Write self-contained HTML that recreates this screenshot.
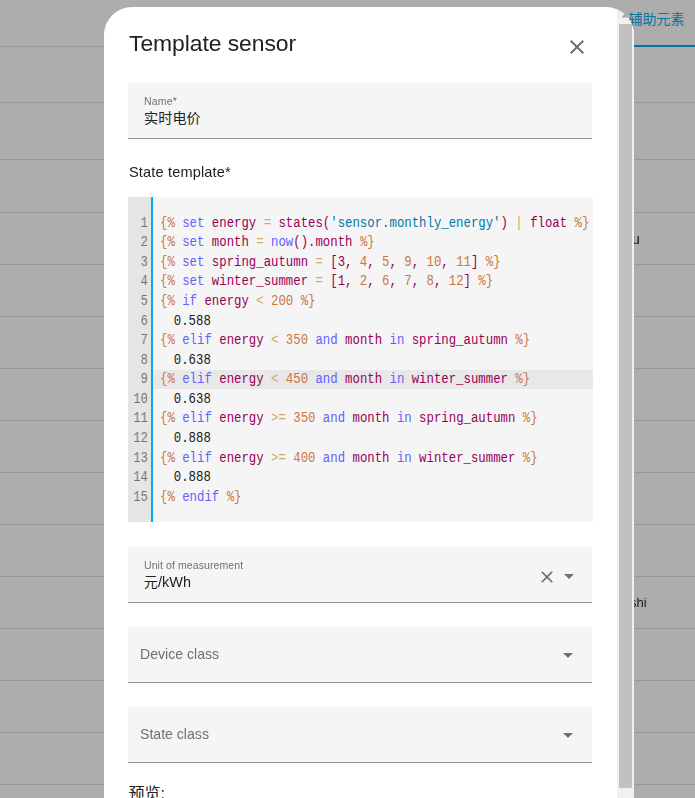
<!DOCTYPE html>
<html><head><meta charset="utf-8"><title>Template sensor</title>
<style>
html,body{margin:0;padding:0}
body{width:695px;height:798px;overflow:hidden;position:relative;background:#adadad;font-family:"Liberation Sans",sans-serif;color:#212121}
.abs{position:absolute}
.bl{position:absolute;left:0;width:695px;height:1px;background:#989898}
.tab{position:absolute;left:634px;top:45px;width:61px;height:2px;background:#0273a6}
.bgt{position:absolute;color:#171717;white-space:nowrap}
.dlg{position:absolute;left:104px;top:7px;width:530px;height:900px;background:#fff;border-radius:28px;overflow:hidden}
/* everything inside dlg positioned relative to page via offset wrapper */
.in{position:absolute;left:-104px;top:-7px;width:695px;height:900px}
.title{position:absolute;left:129px;top:28.5px;font-size:22.9px;letter-spacing:-0.06px;line-height:28px;color:#212121;white-space:nowrap}
.fld{position:absolute;left:128px;width:464px;height:56px;background:#f5f5f5;border-radius:4px 4px 0 0;box-sizing:border-box;border-bottom:1px solid #8e8e8e}
.title,.lbl,.txt,.bgt{will-change:transform}
.lbl{position:absolute;white-space:nowrap;color:#707070}
.txt{position:absolute;white-space:nowrap;color:#212121}
.cjk{position:absolute;white-space:nowrap;font-family:"Liberation Sans","Noto Sans CJK SC",sans-serif}
.ed{position:absolute;left:128px;top:197px;width:465px;height:325.3px;background:#f5f5f5}
.gut{position:absolute;left:128px;top:197px;width:23px;height:325.3px;background:#e5e5e5;border-right:2px solid #03a9f4}
.cl,.gn{position:absolute;font-family:"Liberation Mono",monospace;font-size:14px;line-height:19.57px;height:19.57px;white-space:pre}
.cl{left:159.7px;transform-origin:0 0;transform:scaleX(.881);color:#212121}
.gn{left:128px;width:20px;text-align:right;color:#727272;transform-origin:100% 0;}
.gn{transform:scaleX(.881);will-change:transform}
.actbg{position:absolute;left:153px;width:440px;height:19.57px;background:#e8e8e8}
.k{color:#6262ff}.v{color:#990055}.t{color:#ca7841}.o{color:#cda869}.n{color:#ca7841}.s{color:#0077aa}.p{color:#212121}
.sbt{position:absolute;left:617px;top:7px;width:17px;height:900px;background:#f1f1f1}
.sbth{position:absolute;left:619px;top:24px;width:13px;height:763.6px;background:#c1c1c1}
svg.ic{position:absolute;width:24px;height:24px}
</style></head><body>
<div class="bl" style="top:46px"></div><div class="bl" style="top:102px"></div><div class="bl" style="top:159px"></div><div class="bl" style="top:212px"></div><div class="bl" style="top:264px"></div><div class="bl" style="top:316px"></div><div class="bl" style="top:368px"></div><div class="bl" style="top:420px"></div><div class="bl" style="top:472px"></div><div class="bl" style="top:524px"></div><div class="bl" style="top:576px"></div><div class="bl" style="top:628px"></div><div class="bl" style="top:680px"></div><div class="bl" style="top:732px"></div><div class="bl" style="top:784px"></div>
<div class="tab"></div>
<div class="cjk" style="left:628.4px;top:9.7px;font-size:14px;line-height:18.2px;height:18.2px;color:#0a73a4">辅助元素</div>
<div class="bgt" style="left:631.6px;top:231px;font-size:14px;line-height:16px">u</div>
<div class="bgt" style="left:629.6px;top:595px;font-size:13px;line-height:16px">shi</div>
<div class="dlg"><div class="in">
  <div class="title">Template sensor</div>
  <svg class="ic" style="left:565px;top:35px" viewBox="0 0 24 24"><path fill="#6f6f6f" d="M19,6.41L17.59,5L12,10.59L6.41,5L5,6.41L10.59,12L5,17.59L6.41,19L12,13.41L17.59,19L19,17.59L13.41,12L19,6.41Z"/></svg>

  <div class="fld" style="top:83px"></div>
  <div class="lbl" style="left:144px;top:94px;font-size:10.5px;letter-spacing:.2px;line-height:14px">Name*</div>
  <div class="cjk" style="left:144px;top:108.9px;font-size:14.2px;line-height:18.46px;height:18.46px;color:#212121">实时电价</div>

  <div class="txt" style="left:128.5px;top:163px;font-size:14.6px;letter-spacing:.14px;line-height:18px">State template*</div>

  <div class="ed"></div>
  <div class="cl" style="top:213.70px"><span class="t">{%</span><span class="k"> set</span><span class="v"> energy </span><span class="o">=</span><span class="v"> states(</span><span class="s">'sensor.monthly_energy'</span><span class="v">) </span><span class="o">|</span><span class="v"> float </span><span class="t">%}</span></div><div class="cl" style="top:233.27px"><span class="t">{%</span><span class="k"> set</span><span class="v"> month </span><span class="o">=</span><span class="k"> now</span><span class="v">().month </span><span class="t">%}</span></div><div class="cl" style="top:252.84px"><span class="t">{%</span><span class="k"> set</span><span class="v"> spring_autumn </span><span class="o">=</span><span class="v"> [3,</span><span class="n"> 4</span><span class="v">,</span><span class="n"> 5</span><span class="v">,</span><span class="n"> 9</span><span class="v">,</span><span class="n"> 10</span><span class="v">,</span><span class="n"> 11</span><span class="v">] </span><span class="t">%}</span></div><div class="cl" style="top:272.41px"><span class="t">{%</span><span class="k"> set</span><span class="v"> winter_summer </span><span class="o">=</span><span class="v"> [1,</span><span class="n"> 2</span><span class="v">,</span><span class="n"> 6</span><span class="v">,</span><span class="n"> 7</span><span class="v">,</span><span class="n"> 8</span><span class="v">,</span><span class="n"> 12</span><span class="v">] </span><span class="t">%}</span></div><div class="cl" style="top:291.98px"><span class="t">{%</span><span class="k"> if</span><span class="v"> energy </span><span class="o">&lt;</span><span class="n"> 200</span><span class="v"> </span><span class="t">%}</span></div><div class="cl" style="left:158.5px;top:311.55px"><span class="p">  0.588</span></div><div class="cl" style="top:331.12px"><span class="t">{%</span><span class="k"> elif</span><span class="v"> energy </span><span class="o">&lt;</span><span class="n"> 350</span><span class="k"> and</span><span class="v"> month</span><span class="k"> in</span><span class="v"> spring_autumn </span><span class="t">%}</span></div><div class="cl" style="left:158.5px;top:350.69px"><span class="p">  0.638</span></div><div class="actbg" style="top:369.56px"></div><div class="cl" style="top:370.26px"><span class="t">{%</span><span class="k"> elif</span><span class="v"> energy </span><span class="o">&lt;</span><span class="n"> 450</span><span class="k"> and</span><span class="v"> month</span><span class="k"> in</span><span class="v"> winter_summer </span><span class="t">%}</span></div><div class="cl" style="left:158.5px;top:389.83px"><span class="p">  0.638</span></div><div class="cl" style="top:409.40px"><span class="t">{%</span><span class="k"> elif</span><span class="v"> energy </span><span class="o">&gt;=</span><span class="n"> 350</span><span class="k"> and</span><span class="v"> month</span><span class="k"> in</span><span class="v"> spring_autumn </span><span class="t">%}</span></div><div class="cl" style="left:158.5px;top:428.97px"><span class="p">  0.888</span></div><div class="cl" style="top:448.54px"><span class="t">{%</span><span class="k"> elif</span><span class="v"> energy </span><span class="o">&gt;=</span><span class="n"> 400</span><span class="k"> and</span><span class="v"> month</span><span class="k"> in</span><span class="v"> winter_summer </span><span class="t">%}</span></div><div class="cl" style="left:158.5px;top:468.11px"><span class="p">  0.888</span></div><div class="cl" style="top:487.68px"><span class="t">{%</span><span class="k"> endif</span><span class="v"> </span><span class="t">%}</span></div>
  <div class="gut"></div>
  <div class="gn" style="top:213.70px">1</div><div class="gn" style="top:233.27px">2</div><div class="gn" style="top:252.84px">3</div><div class="gn" style="top:272.41px">4</div><div class="gn" style="top:291.98px">5</div><div class="gn" style="top:311.55px">6</div><div class="gn" style="top:331.12px">7</div><div class="gn" style="top:350.69px">8</div><div class="gn" style="top:370.26px">9</div><div class="gn" style="top:389.83px">10</div><div class="gn" style="top:409.40px">11</div><div class="gn" style="top:428.97px">12</div><div class="gn" style="top:448.54px">13</div><div class="gn" style="top:468.11px">14</div><div class="gn" style="top:487.68px">15</div>

  <div class="fld" style="top:547px"></div>
  <div class="lbl" style="left:144px;top:558px;font-size:10.5px;letter-spacing:.09px;line-height:14px">Unit of measurement</div>
  <div class="cjk" style="left:143.8px;top:573.3px;font-size:14px;line-height:18.2px;height:18.2px;color:#212121">元</div>
  <div class="txt" style="left:157.6px;top:573px;font-size:14.5px;line-height:18px">/kWh</div>
  <svg class="ic" style="left:537px;top:567px;width:20px;height:20px" viewBox="0 0 24 24"><path fill="#6f6f6f" d="M19,6.41L17.59,5L12,10.59L6.41,5L5,6.41L10.59,12L5,17.59L6.41,19L12,13.41L17.59,19L19,17.59L13.41,12L19,6.41Z"/></svg>
  <svg class="ic" style="left:557px;top:564px" viewBox="0 0 24 24"><path fill="#6f6f6f" d="M7,10L12,15L17,10H7Z"/></svg>

  <div class="fld" style="top:627px"></div>
  <div class="lbl" style="left:140.3px;top:644.5px;font-size:14.1px;line-height:18px">Device class</div>
  <svg class="ic" style="left:556px;top:643px" viewBox="0 0 24 24"><path fill="#6f6f6f" d="M7,10L12,15L17,10H7Z"/></svg>

  <div class="fld" style="top:707px"></div>
  <div class="lbl" style="left:140.3px;top:724.5px;font-size:14.1px;line-height:18px">State class</div>
  <svg class="ic" style="left:556px;top:723px" viewBox="0 0 24 24"><path fill="#6f6f6f" d="M7,10L12,15L17,10H7Z"/></svg>

  <div class="cjk" style="left:128.4px;top:784.2px;font-size:16px;line-height:20.8px;height:20.8px;color:#212121">预览:</div>

  <div class="sbt"></div>
  <svg class="abs" style="left:617px;top:7px" width="17" height="17" viewBox="0 0 17 17"><path fill="#a3a3a3" d="M4.5 10.5 L9 5 L13.5 10.5 Z"/></svg>
  <div class="sbth"></div>
</div></div>
</body></html>
